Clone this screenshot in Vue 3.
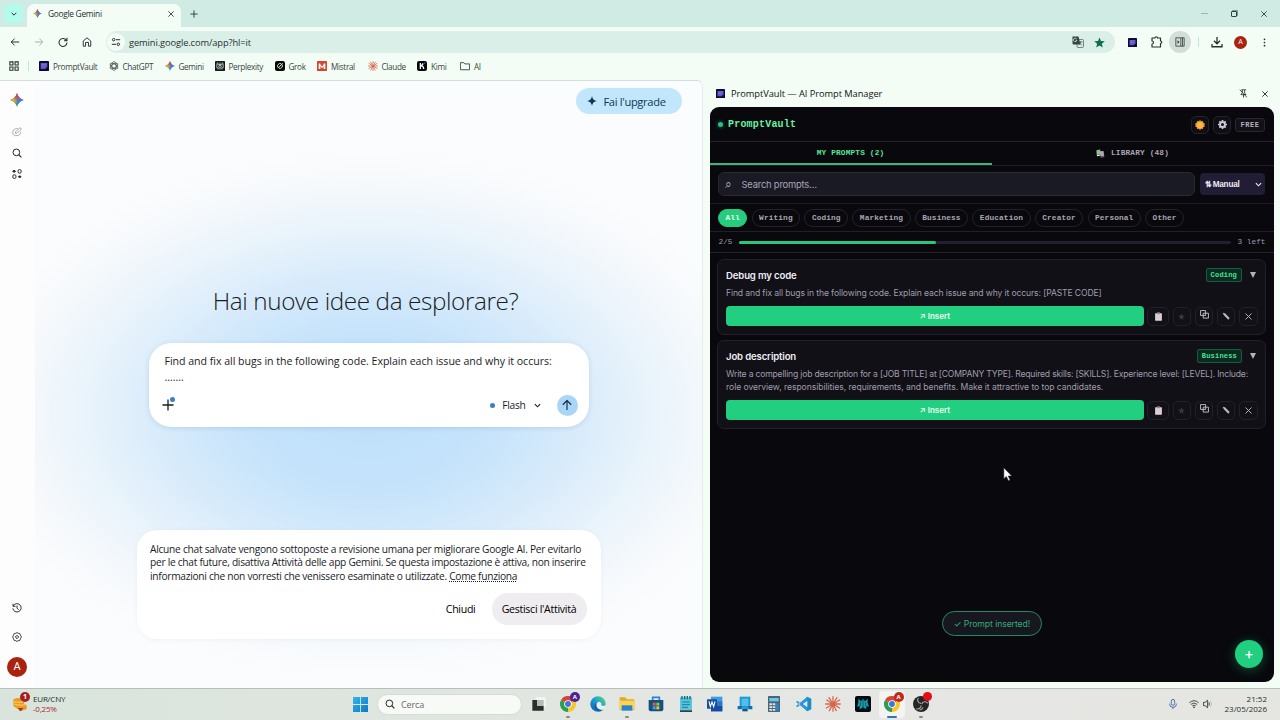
<template>
  <div class="desktop">
    <!-- icon sprite -->
    <svg class="sprite" width="0" height="0">
      <defs>
        <linearGradient id="gBase" x1="0" y1="1" x2="1" y2="0">
          <stop offset="0.2" stop-color="#2f9d63" /><stop offset="0.5" stop-color="#3f7fd8" /><stop offset="1" stop-color="#2f73e0" />
        </linearGradient>
        <radialGradient id="gRed" cx="0.5" cy="0" r="0.55"><stop offset="0.5" stop-color="#d8474d" /><stop offset="1" stop-color="#dc4a4f" stop-opacity="0" /></radialGradient>
        <radialGradient id="gYellow" cx="0" cy="0.5" r="0.58"><stop offset="0.5" stop-color="#e3ad33" /><stop offset="1" stop-color="#e9b63a" stop-opacity="0" /></radialGradient>
        <linearGradient id="gEdge" x1="0" y1="1" x2="1" y2="0"><stop offset="0" stop-color="#0c59a4" /><stop offset="0.5" stop-color="#199bd8" /><stop offset="1" stop-color="#5fdc72" /></linearGradient>
        <linearGradient id="gWin" x1="0" y1="0" x2="1" y2="1"><stop offset="0" stop-color="#36b5e6" /><stop offset="1" stop-color="#0b78cf" /></linearGradient>
      </defs>
      <symbol id="spark" viewBox="0 0 24 24">
        <path fill="url(#gBase)" d="M12 0C13.500 6 18 10.500 24 12C18 13.500 13.500 18 12 24C10.500 18 6 13.500 0 12C6 10.500 10.500 6 12 0Z" />
        <path fill="url(#gYellow)" d="M12 0C13.500 6 18 10.500 24 12C18 13.500 13.500 18 12 24C10.500 18 6 13.500 0 12C6 10.500 10.500 6 12 0Z" />
        <path fill="url(#gRed)" d="M12 0C13.500 6 18 10.500 24 12C18 13.500 13.500 18 12 24C10.500 18 6 13.500 0 12C6 10.500 10.500 6 12 0Z" />
      </symbol>
      <symbol id="sparkMono" viewBox="0 0 24 24"><path fill="currentColor" d="M12 0C13 7 17 11 24 12C17 13 13 17 12 24C11 17 7 13 0 12C7 11 11 7 12 0Z" /></symbol>
      <symbol id="vault" viewBox="0 0 24 24"><rect width="24" height="24" rx="1" fill="#0e0a35" /><path d="M4 5H20V14L15 19H4Z" fill="#6257c4" /><path d="M6 8H17M6 12H14" stroke="#8c84df" stroke-width="1.5" /></symbol>
      <symbol id="gpt" viewBox="0 0 24 24"><g fill="none" stroke="#4d5552" stroke-width="1.9"><ellipse cx="12" cy="12" rx="5" ry="10.5" /><ellipse cx="12" cy="12" rx="5" ry="10.5" transform="rotate(60 12 12)" /><ellipse cx="12" cy="12" rx="5" ry="10.5" transform="rotate(120 12 12)" /></g></symbol>
      <symbol id="perplexity" viewBox="0 0 24 24"><rect width="24" height="24" rx="2" fill="#151b1a" /><path d="M12 3V21M5 4L12 10L19 4V9M5 4V9M4 9H20V16H17M4 9V16H7M12 10L7 14V20L12 15L17 20V14Z" fill="none" stroke="#d9e0dd" stroke-width="1.5" /></symbol>
      <symbol id="grok" viewBox="0 0 24 24"><rect width="24" height="24" rx="5" fill="#050807" /><path d="M15 6.5A6.3 6.3 0 0 0 7 15.5M9.5 17.5A6.3 6.3 0 0 0 17 8.5M7.5 17L18.500 5.500" fill="none" stroke="#fff" stroke-width="2" /></symbol>
      <symbol id="mistral" viewBox="0 0 24 24"><rect width="24" height="24" rx="2" fill="#d4452f" /><path d="M4 19V6H8V9H10V12H14V9H16V6H20V19H16V13H14V16H10V13H8V19Z" fill="#fff" /></symbol>
      <symbol id="claude" viewBox="0 0 24 24"><path d="M12 12L12 1M12 12L18 2.500M12 12L22 6M12 12L23 12M12 12L22 18M12 12L17 22M12 12L12 23M12 12L6.500 22M12 12L2 18M12 12L1 12M12 12L2.500 6M12 12L6 2.500" stroke="#d4664b" stroke-width="1.900" stroke-linecap="round" /></symbol>
      <symbol id="kimi" viewBox="0 0 24 24"><rect width="24" height="24" rx="5" fill="#060908" /><path d="M8 5V19M15 6L9 13M10 11Q16 12 16 19" fill="none" stroke="#fff" stroke-width="3" /><circle cx="18.500" cy="5" r="1.700" fill="#378bf2" /></symbol>
      <symbol id="folder" viewBox="0 0 24 24"><path d="M1 4H9L11.500 7H23V21H1Z" fill="none" stroke="currentColor" stroke-width="2.200" stroke-linejoin="round" /></symbol>
      <symbol id="apps" viewBox="0 0 24 24"><path d="M2 2H9.500V9.500H2ZM14.500 2H22V9.500H14.500ZM2 14.500H9.500V22H2ZM14.500 14.500H22V22H14.500Z" fill="none" stroke="currentColor" stroke-width="2.600" /></symbol>
      <symbol id="back" viewBox="0 0 24 24"><path d="M22 12H3M11 4L3 12L11 20" fill="none" stroke="currentColor" stroke-width="2.400" /></symbol>
      <symbol id="forward" viewBox="0 0 24 24"><path d="M2 12H21M13 4L21 12L13 20" fill="none" stroke="currentColor" stroke-width="2.400" /></symbol>
      <symbol id="reload" viewBox="0 0 24 24"><path d="M20 8A9.500 9.500 0 1 0 21.500 13M21.500 2V9H14.500" fill="none" stroke="currentColor" stroke-width="2.500" /></symbol>
      <symbol id="home" viewBox="0 0 24 24"><path d="M3 22V9.500L12 2L21 9.500V22H15.500V13H8.500V22Z" fill="none" stroke="currentColor" stroke-width="2.300" /></symbol>
      <symbol id="tune" viewBox="0 0 24 24"><g fill="none" stroke="currentColor" stroke-width="2.400"><circle cx="6.500" cy="6.500" r="3" /><path d="M12 6.500H22M2 17.500H12" /><circle cx="17.500" cy="17.500" r="3" /></g></symbol>
      <symbol id="close" viewBox="0 0 24 24"><path d="M4 4L20 20M20 4L4 20" stroke="currentColor" stroke-width="2.500" /></symbol>
      <symbol id="plus" viewBox="0 0 24 24"><path d="M12 1V23M1 12H23" stroke="currentColor" stroke-width="2.600" /></symbol>
      <symbol id="down" viewBox="0 0 24 24"><path d="M5 8.500L12 15.500L19 8.500" fill="none" stroke="currentColor" stroke-width="3" /></symbol>
      <symbol id="translate" viewBox="0 0 24 24"><rect x="10" y="7" width="13" height="16" rx="2" fill="#dcece7" stroke="#56645f" stroke-width="1.500" /><path d="M1 1H13L17 17H3Q1 17 1 15Z" fill="#36443f" /><path d="M10 8.500H7.500M9.800 8.500A3.500 3.500 0 1 1 9 5.500" fill="none" stroke="#e6f4ef" stroke-width="1.500" /><path d="M14 12H21M17.500 10V12Q17 16 13.500 18M15.500 14L20 19" fill="none" stroke="#56645f" stroke-width="1.500" /></symbol>
      <symbol id="star" viewBox="0 0 24 24"><path d="M12 1L15.200 8.600L23.500 9.300L17.200 14.700L19.100 22.800L12 18.500L4.900 22.800L6.800 14.700L0.500 9.300L8.800 8.600Z" fill="currentColor" /></symbol>
      <symbol id="puzzle" viewBox="0 0 24 24"><path d="M2 4H8A2.500 2.500 0 0 1 13 4H19V10A2.500 2.500 0 0 1 19 15V22H2V16A3 3 0 0 0 2 10Z" fill="none" stroke="currentColor" stroke-width="2.300" stroke-linejoin="round" /></symbol>
      <symbol id="panel" viewBox="0 0 24 24"><path d="M2 2H22V22H2ZM14 2V22M18 2V22" fill="none" stroke="currentColor" stroke-width="1.800" /><path d="M6 8L11 12L6 16Z" fill="currentColor" /></symbol>
      <symbol id="download" viewBox="0 0 24 24"><path d="M12 2V15M6 9.500L12 15.500L18 9.500M2 16V21.500H22V16" fill="none" stroke="currentColor" stroke-width="2.600" /></symbol>
      <symbol id="dots" viewBox="0 0 24 24"><g fill="currentColor"><circle cx="12" cy="3.500" r="2.300" /><circle cx="12" cy="12" r="2.300" /><circle cx="12" cy="20.500" r="2.300" /></g></symbol>
      <symbol id="pinOff" viewBox="0 0 24 24"><path d="M6 2H19M9 3V10L5 15H19L15 11V3M12 15V23M2 2L21 22" fill="none" stroke="currentColor" stroke-width="2" /></symbol>
      <symbol id="compose" viewBox="0 0 24 24"><path d="M14 4C6 3 1 8 1.500 14C2 19 7 22 13 20.500C18 20 21 17 20.500 12M8 15Q8 11 11 9L19 2Q23 2 22 6L14 13Q11 16 8 15Z" fill="none" stroke="currentColor" stroke-width="2" /></symbol>
      <symbol id="search" viewBox="0 0 24 24"><circle cx="10.500" cy="10.500" r="8" fill="none" stroke="currentColor" stroke-width="2.300" /><path d="M16 16L22.500 22.500" stroke="currentColor" stroke-width="2.500" /></symbol>
      <symbol id="gems" viewBox="0 0 24 24"><g fill="none" stroke="currentColor" stroke-width="2.200"><path d="M5 3L8.500 5.500L5 8L1.500 5.500Z" fill="currentColor" /><rect x="14.500" y="1.500" width="7.500" height="8.500" rx="3" /><rect x="2" y="14" width="7.500" height="8.500" rx="3" /><ellipse cx="18.500" cy="18.500" rx="3" ry="1.800" fill="currentColor" /></g></symbol>
      <symbol id="history" viewBox="0 0 24 24"><path d="M3 7A10 10 0 1 1 2 13M2.500 2V8H8.500M12 6V12.500L16 16" fill="none" stroke="currentColor" stroke-width="2.200" /></symbol>
      <symbol id="gear" viewBox="0 0 24 24"><g fill="none" stroke="currentColor"><path d="M12 1.500L15 3L19 4L20.500 8L22.500 12L20.500 16L19 20L15 21L12 22.500L9 21L5 20L3.500 16L1.500 12L3.500 8L5 4L9 3Z" stroke-width="2" stroke-linejoin="round" /><path d="M12 8L16 12L12 16L8 12Z" stroke-width="2.300" /></g></symbol>
      <symbol id="arrowUp" viewBox="0 0 24 24"><path d="M12 22V3M3.500 11.500L12 3L20.500 11.500" fill="none" stroke="currentColor" stroke-width="2.200" /></symbol>
      <symbol id="sun" viewBox="0 0 24 24"><path d="M12 0L15 3L19 2.500L20 6.500L24 9L22.500 12L24 15L20 17.500L19 21.500L15 21L12 24L9 21L5 21.500L4 17.500L0 15L1.500 12L0 9L4 6.500L5 2.500L9 3Z" fill="#ec951f" /><circle cx="12" cy="12" r="7.500" fill="#f6b847" /></symbol>
      <symbol id="cog" viewBox="0 0 24 24"><circle cx="12" cy="12" r="6.500" fill="none" stroke="#ccc9da" stroke-width="5" /><path d="M12 0V6M12 18V24M0 12H6M18 12H24M3.500 3.500L7.700 7.700M16.300 16.300L20.500 20.500M20.500 3.500L16.300 7.700M7.700 16.300L3.500 20.500" stroke="#ccc9da" stroke-width="4.500" /></symbol>
      <symbol id="books" viewBox="0 0 24 24"><path d="M1 3L11 1L13 14L2 16Z" fill="#8fc28a" /><path d="M9 6L20 5L22 18L12 20Z" fill="#aca5b6" /><path d="M12 20L22 18V21L13 23Z" fill="#75628f" /><path d="M2 16L11 15V18L3 19Z" fill="#e7efdf" /></symbol>
      <symbol id="clip" viewBox="0 0 24 24"><rect x="3" y="3" width="18" height="20" rx="1" fill="#dfd1d5" /><rect x="8" y="1" width="8" height="5" fill="#93878f" /><path d="M7 11H17M7 15H17" stroke="#c9bcc2" /></symbol>
      <symbol id="copy" viewBox="0 0 24 24"><path d="M1.500 1.500H15V14.500H1.500ZM8.500 8.500H22.500V21.500H8.500Z" fill="none" stroke="currentColor" stroke-width="2.600" /></symbol>
      <symbol id="pencil" viewBox="0 0 24 24"><path d="M2 2L9 4L23 18L19 23L5 9Z" fill="currentColor" /></symbol>
      <symbol id="windows" viewBox="0 0 24 24"><path d="M0 0H11.300V11.300H0ZM12.700 0H24V11.300H12.700ZM0 12.700H11.300V24H0ZM12.700 12.700H24V24H12.700Z" fill="url(#gWin)" /></symbol>
      <symbol id="taskview" viewBox="0 0 24 24"><rect x="7" y="2" width="15" height="15" fill="#f3f5f3" /><path d="M2 6H11V15H19V22H2Z" fill="#2b2c2c" /><rect x="9" y="6" width="10" height="9" fill="#b6b9b7" /></symbol>
      <symbol id="chrome" viewBox="0 0 24 24"><path d="M12 12L1.600 6A12 12 0 0 1 22.400 6Z" fill="#df4035" /><path d="M12 12L22.400 6A12 12 0 0 1 12 24Z" fill="#f6c72d" /><path d="M12 12V24A12 12 0 0 1 1.600 6Z" fill="#2d9e50" /><circle cx="12" cy="12" r="5.700" fill="#fff" /><circle cx="12" cy="12" r="4.400" fill="#3c78dc" /></symbol>
      <symbol id="edge" viewBox="0 0 24 24"><circle cx="12" cy="12" r="11.500" fill="url(#gEdge)" /><path d="M10 12Q11 8 15 9Q18 10 17 14Q21 16 23.500 13V18L17 22Q7 21 10 12Z" fill="#e4f0ea" /><path d="M9 10Q4 16 9 21Q14 25 19 21Q8 21 9 10Z" fill="#155ca8" /></symbol>
      <symbol id="explorer" viewBox="0 0 24 24"><path d="M1 2H9L12 5H23V21H1Z" fill="#e7a922" /><path d="M1 7H23V20H1Z" fill="#fad557" /><path d="M4 14H20V22H4Z" fill="#2784c9" /></symbol>
      <symbol id="store" viewBox="0 0 24 24"><path d="M7 7V2H17V7" fill="none" stroke="#2388cc" stroke-width="2.500" /><path d="M1 6H23V20Q23 23 20 23H4Q1 23 1 20Z" fill="#174f81" /><path d="M7 10H11.500V14.500H7Z" fill="#e45b39" /><path d="M12.500 10H17V14.500H12.500Z" fill="#8bc34a" /><path d="M7 15.500H11.500V20H7Z" fill="#37a7e3" /><path d="M12.500 15.500H17V20H12.500Z" fill="#f3c13a" /></symbol>
      <symbol id="notepad" viewBox="0 0 24 24"><path d="M3 2H21V24H3Z" fill="#59c6dc" /><path d="M3 21.500H21V24H3Z" fill="#3a3c43" /><path d="M6 0V5M10 0V5M14 0V5M18 0V5" stroke="#176579" stroke-width="2" /><path d="M6 9H18M6 13H18M6 17H15" stroke="#167f99" stroke-width="1.500" /></symbol>
      <symbol id="word" viewBox="0 0 24 24"><path d="M6 1H23V23H6Z" fill="#3f9be2" /><path d="M6 8H23V15H6Z" fill="#2877cb" /><path d="M6 15H23V23H6Z" fill="#164b9e" /><rect y="5" width="15" height="14" rx="1" fill="#184d9e" /><path d="M3 8L5 16L7.500 9L10 16L12 8" fill="none" stroke="#fff" stroke-width="1.700" /></symbol>
      <symbol id="remote" viewBox="0 0 24 24"><path d="M4 1H20V19H4Z" fill="#2199d8" /><path d="M1 15H7V20H1ZM17 15H23V20H17Z" fill="#126ea8" /><path d="M7 4H17V15H7Z" fill="#4fc0ec" /><path d="M8 19H16V23H8Z" fill="#125782" /></symbol>
      <symbol id="calc" viewBox="0 0 24 24"><rect x="3" width="18" height="24" rx="1" fill="#4e6376" /><path d="M5 3H19V8H5Z" fill="#6bc7e8" /><path d="M5 11H9V14H5ZM10 11H14V14H10ZM5 15.500H9V18H5ZM10 15.500H14V18H10ZM5 19.500H9V22H5ZM10 19.500H14V22H10Z" fill="#dce5ea" /><path d="M15 11H19V22H15Z" fill="#2687c6" /></symbol>
      <symbol id="vscode" viewBox="0 0 24 24"><path d="M17 1L23 4V20L17 23L5 12Z" fill="#1e8ccd" /><path d="M17 7V17L10 12Z" fill="#e4e8e4" /><path d="M2 7L17 19V23L0 9ZM2 17L17 5V1L0 15Z" fill="#2c9fdd" /></symbol>
      <symbol id="pplx" viewBox="0 0 24 24"><rect width="24" height="24" rx="3" fill="#040c10" /><path d="M5 4L9 8L12 4L15 8L19 4V10L21 16L17 15V20L12 17L7 20V15L3 16L5 10Z" fill="#199cad" /><path d="M12 5V20M8 9V15M16 9V15" stroke="#083941" /></symbol>
      <symbol id="obs" viewBox="0 0 24 24"><circle cx="12" cy="12" r="12" fill="#252526" /><g fill="none" stroke="#a9abad" stroke-width="1.700"><path d="M12 11A5 5 0 0 1 8 3M13 12A5 5 0 0 1 22 11M12 14A5 5 0 0 1 5 19M15 17Q14 20 10 21" /></g></symbol>
      <symbol id="mic" viewBox="0 0 24 24"><rect x="8" y="1" width="8" height="14" rx="4" fill="none" stroke="currentColor" stroke-width="2" /><path d="M4 11V13A8 7 0 0 0 20 13V11M12 20V24" fill="none" stroke="currentColor" stroke-width="2" /></symbol>
      <symbol id="wifi" viewBox="0 0 24 24"><path d="M1 9Q12-1 23 9M4.500 13Q12 6 19.500 13M8 16.500Q12 13 16 16.500" fill="none" stroke="currentColor" stroke-width="2" /><circle cx="12" cy="20" r="2" fill="currentColor" /></symbol>
      <symbol id="sound" viewBox="0 0 24 24"><path d="M1 8H5L11 3V21L5 16H1ZM14 8Q17 12 14 16" fill="none" stroke="currentColor" stroke-width="2" /><path d="M18 5Q23 12 18 19" fill="none" stroke="#b9bcb8" stroke-width="2" /></symbol>
      <symbol id="coins" viewBox="0 0 24 24"><path d="M2 5Q10 1 18 5V12L22 14V20L12 23L8 19L2 15Z" fill="#e89b25" /><path d="M2 8Q9 11 17 8M3 12Q10 15 20 13" fill="none" stroke="#f8c659" stroke-width="2" /><path d="M9 18H17L13 23Z" fill="#a4322d" /></symbol>
    </svg>

    <!-- tab strip -->
    <div class="tab-strip">
      <div class="tab-search"><svg class="s8"><use href="#down" /></svg></div>
      <div class="tab">
        <svg class="s9"><use href="#spark" /></svg>
        <span class="tab-title">Google Gemini</span>
        <svg class="tab-close"><use href="#close" /></svg>
      </div>
      <svg class="new-tab"><use href="#plus" /></svg>
      <div class="win-controls">
        <i class="minimize"></i>
        <i class="restore"></i>
        <svg class="s8"><use href="#close" /></svg>
      </div>
    </div>

    <div class="toolbar">
      <svg class="nav-icon"><use href="#back" /></svg>
      <svg class="nav-icon muted"><use href="#forward" /></svg>
      <svg class="nav-icon"><use href="#reload" /></svg>
      <svg class="nav-icon"><use href="#home" /></svg>
      <div class="url-bar">
        <span class="site-info"><svg class="s10"><use href="#tune" /></svg></span>
        <span class="url">gemini.google.com/app?hl=it</span>
        <svg class="translate"><use href="#translate" /></svg>
        <svg class="bookmark-star"><use href="#star" /></svg>
      </div>
      <div class="extensions">
        <svg class="s9"><use href="#vault" /></svg>
        <svg class="puzzle"><use href="#puzzle" /></svg>
        <span class="panel-toggle"><svg class="s10"><use href="#panel" /></svg></span>
        <i class="divider"></i>
        <svg class="download"><use href="#download" /></svg>
        <span class="avatar small">A</span>
        <svg class="menu"><use href="#dots" /></svg>
      </div>
    </div>

    <div class="bookmarks">
      <svg class="s10"><use href="#apps" /></svg>
      <i class="divider"></i>
      <span v-for="b in bookmarks" :key="b.name" class="bookmark" :style="{ width: b.width + 'px' }">
        <svg class="bookmark-icon"><use :href="'#' + b.icon" /></svg>{{ b.name }}
      </span>
    </div>

    <div class="workspace">
      <!-- Gemini -->
      <div class="gemini">
        <nav class="rail">
          <svg class="rail-logo"><use href="#spark" /></svg>
          <svg class="rail-icon faded"><use href="#compose" /></svg>
          <svg class="rail-icon"><use href="#search" /></svg>
          <svg class="rail-icon"><use href="#gems" /></svg>
          <svg class="rail-icon bottom"><use href="#history" /></svg>
          <svg class="rail-icon"><use href="#gear" /></svg>
          <span class="avatar">A</span>
        </nav>
        <main class="chat">
          <button class="upgrade"><svg class="s10"><use href="#sparkMono" /></svg>Fai l'upgrade</button>
          <h1>Hai nuove idee da esplorare?</h1>
          <div class="composer">
            <p class="prompt-text">Find and fix all bugs in the following code. Explain each issue and why it occurs:</p>
            <p class="prompt-dots">.......</p>
            <div class="composer-bar">
              <span class="attach"><svg class="s12"><use href="#plus" /></svg><i></i></span>
              <span class="model-dot"></span>
              <span class="model">Flash</span>
              <svg class="s9 chevron"><use href="#down" /></svg>
              <button class="send"><svg class="s12"><use href="#arrowUp" /></svg></button>
            </div>
          </div>
          <div class="notice">
            <p class="n1">Alcune chat salvate vengono sottoposte a revisione umana per migliorare Google AI. Per evitarlo</p>
            <p>per le chat future, disattiva Attività delle app Gemini. Se questa impostazione è attiva, non inserire</p>
            <p>informazioni che non vorresti che venissero esaminate o utilizzate. <a>Come funziona</a></p>
            <div class="notice-actions">
              <button class="plain">Chiudi</button>
              <button class="filled">Gestisci l'Attività</button>
            </div>
          </div>
        </main>
      </div>

      <!-- PromptVault side panel -->
      <aside class="side">
        <div class="side-title">
          <svg class="s9"><use href="#vault" /></svg>
          <span>PromptVault — AI Prompt Manager</span>
          <svg class="s9 pin"><use href="#pinOff" /></svg>
          <svg class="side-close"><use href="#close" /></svg>
        </div>
        <div class="vault">
          <header class="vault-header">
            <i class="status"></i>
            <span class="brand">PromptVault</span>
            <button class="head-btn"><svg class="s10"><use href="#sun" /></svg></button>
            <button class="head-btn"><svg class="s9"><use href="#cog" /></svg></button>
            <span class="plan">FREE</span>
          </header>
          <div class="vault-tabs">
            <div class="vault-tab active">MY PROMPTS (2)</div>
            <div class="vault-tab"><svg class="s9"><use href="#books" /></svg>LIBRARY (48)</div>
          </div>
          <div class="search-row">
            <div class="search-box"><span class="lens">⌕</span>{{ placeholder }}</div>
            <div class="sort"><span class="sort-arrows">⇅</span>Manual<svg class="s9"><use href="#down" /></svg></div>
          </div>
          <div class="chips">
            <span v-for="c in categories" :key="c" class="chip" :class="{ active: c === activeCategory }">{{ c }}</span>
          </div>
          <div class="usage">
            <span>{{ used }}/{{ limit }}</span>
            <div class="usage-bar"><div class="usage-fill" :style="{ width: (used / limit) * 100 + '%' }"></div></div>
            <span>{{ limit - used }} left</span>
          </div>
          <div class="cards">
            <article v-for="p in prompts" :key="p.title" class="card">
              <div class="card-head">
                <h2>{{ p.title }}</h2>
                <span class="tag">{{ p.category }}</span>
                <span class="caret"></span>
              </div>
              <div class="card-text"><p v-for="(line, i) in p.lines" :key="i">{{ line }}</p></div>
              <div class="card-actions">
                <button class="insert">↗ Insert</button>
                <button v-for="a in actions" :key="a" class="action" :class="a"><svg class="s9"><use :href="'#' + a" /></svg></button>
              </div>
            </article>
          </div>
          <div class="toast">✓ Prompt inserted!</div>
          <button class="fab">+</button>
        </div>
      </aside>
    </div>

    <!-- taskbar -->
    <div class="taskbar">
      <div class="widget">
        <span class="coins"><svg class="s16"><use href="#coins" /></svg><b>1</b></span>
        <div class="rate"><span>EUR/CNY</span><span class="down">-0,25%</span></div>
      </div>
      <svg class="start"><use href="#windows" /></svg>
      <div class="task-search"><svg class="s10"><use href="#search" /></svg>Cerca</div>
      <div class="task-apps">
        <span v-for="(t, i) in taskApps" :key="i" class="task-app" :class="t.state">
          <svg class="s16"><use :href="'#' + t.icon" /></svg>
          <b v-if="t.badge" :class="t.badge">{{ t.letter }}</b>
        </span>
      </div>
      <div class="tray">
        <svg class="mic"><use href="#mic" /></svg>
        <svg class="s10"><use href="#wifi" /></svg>
        <svg class="s10"><use href="#sound" /></svg>
        <div class="clock"><span>21:52</span><span>23/05/2026</span></div>
      </div>
    </div>

    <svg class="cursor" viewBox="0 0 12 18"><path d="M1 1V14L4 11.500L6.500 16.500L8.500 15.500L6.300 10.800H10.500Z" fill="#fff" stroke="#222" stroke-width="0.700" /></svg>
  </div>
</template>

<script setup>
import { ref } from 'vue'

const bookmarks = [
  { name: 'PromptVault', icon: 'vault', width: 69.5 },
  { name: 'ChatGPT', icon: 'gpt', width: 56 },
  { name: 'Gemini', icon: 'spark', width: 50 },
  { name: 'Perplexity', icon: 'perplexity', width: 60 },
  { name: 'Grok', icon: 'grok', width: 42.5 },
  { name: 'Mistral', icon: 'mistral', width: 50.5 },
  { name: 'Claude', icon: 'claude', width: 49.5 },
  { name: 'Kimi', icon: 'kimi', width: 43 },
  { name: 'AI', icon: 'folder', width: 30 }
]

const placeholder = 'Search prompts…'
const categories = ['All', 'Writing', 'Coding', 'Marketing', 'Business', 'Education', 'Creator', 'Personal', 'Other']
const activeCategory = ref('All')
const used = ref(2)
const limit = 5
const actions = ['clip', 'star', 'copy', 'pencil', 'close']

const prompts = [
  {
    title: 'Debug my code',
    category: 'Coding',
    lines: ['Find and fix all bugs in the following code. Explain each issue and why it occurs: [PASTE CODE]']
  },
  {
    title: 'Job description',
    category: 'Business',
    lines: [
      'Write a compelling job description for a [JOB TITLE] at [COMPANY TYPE]. Required skills: [SKILLS]. Experience level: [LEVEL]. Include:',
      'role overview, responsibilities, requirements, and benefits. Make it attractive to top candidates.'
    ]
  }
]

const taskApps = [
  { icon: 'taskview' },
  { icon: 'chrome', state: 'open', badge: 'purple', letter: 'A' },
  { icon: 'edge' },
  { icon: 'explorer', state: 'open' },
  { icon: 'store' },
  { icon: 'notepad' },
  { icon: 'word' },
  { icon: 'remote' },
  { icon: 'calc' },
  { icon: 'vscode' },
  { icon: 'claude' },
  { icon: 'pplx' },
  { icon: 'chrome', state: 'focused', badge: 'red', letter: 'A' },
  { icon: 'obs', state: 'open', badge: 'rec', letter: '' }
]
</script>

<style>
body {
  margin: 0;
  overflow: hidden;
}
</style>

<style scoped>
* {
  box-sizing: border-box;
}

.desktop {
  position: relative;
  width: 1280px;
  height: 720px;
  display: flex;
  flex-direction: column;
  overflow: hidden;
  background: #f3fdf6;
  color: #27302d;
  font-family: "Open Sans", "Noto Sans", sans-serif;
  white-space: nowrap;
}

.sprite {
  position: absolute;
}

svg {
  flex: none;
  display: block;
}

p,
h1,
h2 {
  margin: 0;
}

button {
  border: none;
  padding: 0;
  font-family: inherit;
  flex: none;
}

.s8 { width: 8px; height: 8px; }
.s9 { width: 9px; height: 9px; }
.s10 { width: 10px; height: 10px; }
.s12 { width: 12px; height: 12px; }
.s16 { width: 16px; height: 16px; }

/* browser */
.tab-strip {
  height: 27px;
  flex: none;
  display: flex;
  align-items: center;
  padding-left: 4px;
  background: #d0ebe3;
}

.tab-search {
  width: 19px;
  height: 19px;
  border-radius: 6px;
  display: flex;
  align-items: center;
  justify-content: center;
  background: #b3fbeb;
}

.tab {
  align-self: flex-end;
  width: 154px;
  height: 23px;
  margin-left: 4px;
  padding: 0 6px;
  display: flex;
  align-items: center;
  border-radius: 7px 7px 0 0;
  background: #f3fdf6;
}

.tab-title {
  margin-left: 6px;
  flex: 1;
  font-size: 8.4px;
  letter-spacing: -0.3px;
  padding-bottom: 4px;
}

.tab > svg {
  margin-bottom: 4px;
}

.tab-close {
  width: 8px;
  height: 8px;
}

.new-tab {
  width: 8px;
  height: 8px;
  margin-left: 9px;
}

.win-controls {
  margin-left: auto;
  padding-right: 12px;
  display: flex;
  align-items: center;
  gap: 23px;
}

.minimize {
  width: 7px;
  height: 1px;
  background: #9cb5ad;
}

.restore {
  width: 6px;
  height: 6px;
  border: 1px solid #33403b;
  border-radius: 1px;
  box-shadow: 1px -1px 0 0 #7e908a;
}

.toolbar {
  height: 30px;
  flex: none;
  display: flex;
  align-items: center;
  padding-left: 10px;
}

.nav-icon {
  width: 10px;
  height: 10px;
  margin-right: 14px;
}

.nav-icon.muted {
  color: #a5b1ab;
}

.url-bar {
  width: 1009px;
  height: 22px;
  display: flex;
  align-items: center;
  border-radius: 11px;
  background: #dbefe9;
}

.site-info {
  width: 18px;
  height: 18px;
  margin-left: 1px;
  border-radius: 50%;
  display: flex;
  align-items: center;
  justify-content: center;
  background: #f3fdf6;
}

.url {
  flex: 1;
  margin-left: 4px;
  font-size: 9.3px;
  letter-spacing: -0.1px;
}

.translate {
  width: 12px;
  height: 12px;
  margin-right: 10px;
}

.bookmark-star {
  width: 11px;
  height: 11px;
  margin-right: 10px;
  color: #0e6e50;
}

.extensions {
  flex: 1;
  display: flex;
  align-items: center;
  padding-left: 13px;
}

.puzzle {
  width: 12px;
  height: 12px;
  margin: 0 6px 0 14px;
}

.panel-toggle {
  width: 22px;
  height: 22px;
  margin-right: 7px;
  border-radius: 50%;
  display: flex;
  align-items: center;
  justify-content: center;
  background: #d2ded8;
}

.download {
  width: 12px;
  height: 12px;
  margin: 0 11px 0 12px;
}

.menu {
  width: 9px;
  height: 9px;
  margin-left: 13px;
}

.divider {
  width: 1px;
  height: 10px;
  background: #b5ecd7;
}

.avatar {
  width: 20px;
  height: 20px;
  border-radius: 50%;
  background: #a9230f;
  color: #fff;
  font-size: 11px;
  line-height: 20px;
  text-align: center;
  font-family: Roboto, sans-serif;
}

.avatar.small {
  width: 13px;
  height: 13px;
  font-size: 7px;
  line-height: 13px;
}

.bookmarks {
  height: 23px;
  flex: none;
  display: flex;
  align-items: center;
  padding: 0 0 5px 9px;
}

.bookmarks .divider {
  margin: 0 10px 0 9px;
}

.bookmark {
  display: flex;
  align-items: center;
  gap: 4px;
  font-size: 8.2px;
  letter-spacing: -0.34px;
  color: #3b4642;
}

.bookmark-icon {
  width: 10px;
  height: 10px;
}

.workspace {
  height: 608px;
  flex: none;
  display: flex;
}

/* gemini */
.gemini {
  width: 703px;
  display: flex;
  border-top: 1px solid #d3dfda;
  border-right: 1px solid #e6eeea;
  border-radius: 0 6px 0 0;
  background: #fdfdfe;
  overflow: hidden;
  color: #1a1c1f;
}

.rail {
  width: 34px;
  margin-right: 1px;
  display: flex;
  flex-direction: column;
  align-items: center;
  padding: 12px 0 11px;
}

.rail-logo {
  width: 14px;
  height: 14px;
  margin-bottom: 20px;
}

.rail-icon {
  width: 10px;
  height: 10px;
  margin-bottom: 11px;
}

.rail-icon.faded {
  color: #9b9d9f;
}

.rail-icon.bottom {
  margin-top: auto;
  margin-bottom: 19px;
}

.rail-icon.bottom + .rail-icon {
  margin-bottom: 15px;
}

.chat {
  flex: 1;
  display: flex;
  flex-direction: column;
  align-items: center;
  background: radial-gradient(ellipse 400px 262px at 50% 332px, #bfdffa 0%, #c5e3fb 30%, #d8ebfb 52%, #eaf4fb 72%, #f6f9fc 88%, #fbfcfd 100%);
  font-family: "Open Sans", sans-serif;
}

.upgrade {
  align-self: flex-end;
  width: 106px;
  height: 26px;
  margin: 7px 20.5px 0 0;
  padding-right: 4px;
  display: flex;
  align-items: center;
  justify-content: center;
  gap: 6px;
  border-radius: 13px;
  background: #c2e7fc;
  color: #0b3954;
  font-size: 11.1px;
  letter-spacing: -0.3px;
}

h1 {
  margin-top: 169px;
  font-size: 24.3px;
  line-height: 36px;
  font-weight: 300;
  letter-spacing: -0.4px;
  margin-left: -6px;
}

.composer {
  width: 440px;
  height: 84px;
  margin-top: 24px;
  padding: 10px 11px 0 16px;
  border-radius: 22px;
  background: #fff;
  box-shadow: 0 1px 5px rgba(80, 130, 175, 0.22);
  font-size: 10.6px;
}

.prompt-text,
.prompt-dots {
  line-height: 16px;
  letter-spacing: -0.03px;
}

.composer-bar {
  display: flex;
  align-items: center;
  height: 24px;
  margin-top: 8px;
  margin-left: -3px;
}

.attach {
  position: relative;
  margin-right: auto;
}

.attach i {
  position: absolute;
  top: -2px;
  right: -1px;
  width: 5px;
  height: 5px;
  border-radius: 50%;
  background: #397fc9;
}

.model-dot {
  width: 5px;
  height: 5px;
  border-radius: 50%;
  margin-right: 7px;
  background: #397fc9;
}

.model {
  font-size: 10.2px;
  letter-spacing: -0.25px;
}

.chevron {
  margin: 0 15px 0 7px;
}

.send {
  width: 21px;
  height: 21px;
  border-radius: 50%;
  display: flex;
  align-items: center;
  justify-content: center;
  background: #a9d6f6;
  color: #10253a;
}

.notice {
  width: 464px;
  height: 109px;
  margin-top: 102.5px;
  padding: 13.5px 14px 0 13.5px;
  border-radius: 20px;
  background: #fff;
  box-shadow: 0 1px 5px rgba(100, 140, 170, 0.08);
  font-size: 10.2px;
  line-height: 13.4px;
  letter-spacing: -0.28px;
}

.n1 {
  letter-spacing: -0.26px;
}

.notice a {
  text-decoration: underline dotted;
}

.notice-actions {
  display: flex;
  justify-content: flex-end;
  align-items: center;
  gap: 16px;
  margin-top: 10px;
}

.notice-actions button {
  background: none;
  font-size: 10.6px;
  letter-spacing: -0.3px;
}

.notice-actions .filled {
  width: 95px;
  height: 32px;
  border-radius: 16px;
  background: #efedef;
}

/* side panel */
.side {
  width: 577px;
  padding: 0 6px 6px 6.5px;
}

.side-title {
  height: 27px;
  display: flex;
  align-items: center;
  padding: 0 5px 0 6.5px;
  color: #101513;
  font-size: 9.3px;
}

.side-title span {
  flex: 1;
  margin-left: 6px;
  letter-spacing: -0.06px;
}

.pin {
  margin-right: 13px;
}

.side-close {
  width: 8px;
  height: 8px;
}

.vault {
  position: relative;
  height: 575px;
  padding: 0 0.5px 0 0;
  border-radius: 9px;
  background: #08080d;
  color: #9d9aab;
  font-family: Inter, "DejaVu Sans", sans-serif;
  overflow: hidden;
}

.vault-header {
  height: 35px;
  display: flex;
  align-items: center;
  padding: 1px 8.5px 0;
  border-bottom: 1px solid #22222a;
}

.status {
  width: 5px;
  height: 5px;
  border-radius: 50%;
  background: #2fbd80;
  box-shadow: 0 0 4px #1c8c5b;
}

.brand {
  flex: 1;
  margin-left: 5px;
  color: #67f3a3;
  font: bold 10px "Liberation Mono", monospace;
  letter-spacing: 0.2px;
}

.head-btn {
  width: 18px;
  height: 18px;
  margin-right: 4px;
  display: flex;
  align-items: center;
  justify-content: center;
  border: 1px solid #24232c;
  border-radius: 5px;
  background: #0e0e14;
}

.plan {
  width: 30px;
  height: 14px;
  border: 1px solid #292731;
  border-radius: 3px;
  background: #111117;
  color: #b5b0c0;
  font: bold 7px/12px "Liberation Mono", monospace;
  letter-spacing: 0.6px;
  text-align: center;
}

.vault-tabs {
  height: 24px;
  display: flex;
  border-bottom: 1px solid #1e1e26;
  font: bold 7.8px "Liberation Mono", monospace;
  letter-spacing: 0.15px;
}

.vault-tab {
  flex: 1;
  display: flex;
  align-items: center;
  justify-content: center;
  gap: 6px;
  padding-bottom: 1px;
  color: #a8a4b1;
}

.vault-tab.active {
  padding-bottom: 0;
  color: #58e697;
  border-bottom: 2px solid #45b27c;
}

.search-row {
  height: 38px;
  display: flex;
  align-items: center;
  gap: 5px;
  padding: 0 8.5px 1px;
  border-bottom: 1px solid #1d1d25;
}

.search-box {
  flex: 1;
  height: 24px;
  display: flex;
  align-items: center;
  padding-left: 6px;
  border: 1px solid #292833;
  border-radius: 6px;
  background: #1a1a24;
  color: #aaa5b9;
  font-size: 9.4px;
  letter-spacing: -0.2px;
}

.lens {
  width: 16.5px;
  font: 12px "DejaVu Sans", sans-serif;
}

.sort {
  width: 65px;
  height: 22px;
  display: flex;
  align-items: center;
  padding: 0 2px 0 5px;
  border-radius: 4px;
  background: #201d34;
  color: #eeebf6;
  font: bold 8.2px "Liberation Sans", sans-serif;
  letter-spacing: -0.25px;
}

.sort-arrows {
  margin-right: 1px;
}

.sort svg {
  margin-left: auto;
}

.chips {
  height: 28px;
  display: flex;
  align-items: center;
  gap: 4.2px;
  padding-left: 8.5px;
  border-bottom: 1px solid #202028;
}

.chip {
  height: 18px;
  padding: 0 6.5px;
  border: 1px solid #23222b;
  border-radius: 9px;
  color: #aaa6b3;
  font: bold 7.8px/16px "Liberation Mono", monospace;
  letter-spacing: 0.12px;
}

.chip.active {
  border-color: #25cc7e;
  background: #25cc7e;
  color: #e5fff2;
}

.usage {
  height: 21px;
  display: flex;
  align-items: center;
  gap: 6px;
  padding: 0 8px 0 9px;
  border-bottom: 1px solid #24232b;
  font: 7.8px "Liberation Mono", monospace;
}

.usage-bar {
  flex: 1;
  height: 3px;
  border-radius: 2px;
  background: #22202e;
}

.usage-fill {
  height: 3px;
  border-radius: 2px;
  background: #2bc67d;
}

.cards {
  padding: 6px 7.5px 0 7.5px;
  display: flex;
  flex-direction: column;
  gap: 5px;
}

.card {
  padding: 8px 7.5px 8px 8px;
  border: 1px solid #21212a;
  border-radius: 7px;
  background: #101016;
}

.card-head {
  display: flex;
  align-items: center;
  height: 14px;
  padding-right: 1.5px;
}

h2 {
  flex: 1;
  color: #f0edf6;
  font-size: 9.6px;
  font-weight: 600;
  letter-spacing: -0.15px;
}

.tag {
  height: 14px;
  padding: 0 4px;
  border: 1px solid #195b3d;
  border-radius: 2px;
  background: #0b2b20;
  color: #4ce196;
  font: bold 7px/12px "Liberation Mono", monospace;
  letter-spacing: 0.2px;
}

.caret {
  margin: 0 0 0 8px;
  border: 3.5px solid transparent;
  border-top: 6px solid #b5b1bd;
  border-bottom: 0;
}

.card-text {
  margin: 5px 0 6px;
  font-size: 8.6px;
  line-height: 13px;
  color: #a09cac;
}

.card-text p {
  letter-spacing: -0.06px;
}

.card-text p:only-child {
  letter-spacing: -0.125px;
}

.card-text p:first-child:not(:last-child) {
  letter-spacing: -0.19px;
}

.card-actions {
  display: flex;
  align-items: center;
  gap: 3.6px;
}

.insert {
  flex: 1;
  height: 20px;
  border-radius: 4px;
  background: #22cf80;
  color: #ecfff5;
  font-size: 8px;
  font-weight: 600;
}

.action {
  width: 18.5px;
  height: 19px;
  display: flex;
  align-items: center;
  justify-content: center;
  border: 1px solid #22212a;
  border-radius: 5px;
  background: #111117;
  color: #bdb8c6;
}

.action.clip {
  width: 22px;
}

.action.star {
  color: #383641;
}

.action.star svg {
  width: 7px;
  height: 7px;
}

.action.copy svg {
  margin-bottom: 4px;
}

.action.pencil svg {
  width: 8px;
  height: 8px;
}

.toast {
  position: absolute;
  left: 232.5px;
  top: 504px;
  width: 100px;
  height: 25px;
  border: 1px solid #278963;
  border-radius: 13px;
  background: #16171f;
  color: #37a779;
  font-size: 8.7px;
  line-height: 24px;
  letter-spacing: -0.1px;
  text-align: center;
}

.fab {
  position: absolute;
  right: 11px;
  bottom: 14px;
  width: 28px;
  height: 28px;
  border-radius: 50%;
  background: #20cf80;
  box-shadow: 0 2px 12px rgba(32, 207, 128, 0.35);
  color: #fff;
  font-size: 15px;
  line-height: 28px;
}

/* taskbar */
.taskbar {
  flex: 1;
  display: flex;
  align-items: center;
  padding-bottom: 1px;
  border-top: 1px solid #b7bfba;
  background: linear-gradient(90deg, #d9e5dc 0%, #dfe5df 30%, #e6e7e4 65%, #e5e6e2 100%);
}

.widget {
  width: 353px;
  display: flex;
  align-items: center;
  padding-left: 12px;
  gap: 5px;
}

.coins {
  position: relative;
}

.coins b {
  position: absolute;
  top: -4px;
  right: -2px;
  width: 10px;
  height: 10px;
  border-radius: 50%;
  background: #a51f21;
  color: #fff;
  font-size: 7px;
  line-height: 10px;
  text-align: center;
}

.rate {
  display: flex;
  flex-direction: column;
  font-size: 8px;
  line-height: 10.5px;
  letter-spacing: -0.2px;
}

.rate .down {
  color: #b02733;
}

.start {
  width: 15px;
  height: 15px;
}

.task-search {
  width: 145px;
  height: 21px;
  margin-left: 9px;
  padding-left: 7px;
  display: flex;
  align-items: center;
  gap: 6px;
  border: 1px solid #d5dcd6;
  border-radius: 11px;
  background: #f7faf6;
  color: #686d6a;
  font-size: 9px;
  letter-spacing: -0.1px;
}

.task-search svg {
  color: #1d211f;
}

.task-apps {
  display: flex;
  margin-left: 2px;
}

.task-app {
  position: relative;
  width: 29.45px;
  height: 27px;
  display: flex;
  align-items: center;
  justify-content: center;
}

.task-app.open::after,
.task-app.focused::after {
  content: "";
  position: absolute;
  bottom: 0;
  width: 4px;
  height: 2px;
  border-radius: 1px;
  background: #868b88;
}

.task-app.focused {
  background: #f3f4f1;
  background-clip: content-box;
  padding: 0 2px;
  border-radius: 5px;
}

.task-app.focused::after {
  width: 10px;
  background: #2c75b8;
}

.task-app b {
  position: absolute;
  top: 1px;
  right: 3px;
  width: 10px;
  height: 10px;
  border-radius: 50%;
  color: #fff;
  font-size: 6px;
  line-height: 10px;
  text-align: center;
}

.task-app .purple { background: #4c2193; }
.task-app .red { background: #b92c1c; }
.task-app .rec { right: 4px; width: 9px; height: 9px; background: #e30e13; }

.tray {
  margin-left: auto;
  display: flex;
  align-items: center;
  gap: 4px;
  padding-right: 13px;
}

.mic {
  width: 10px;
  height: 10px;
  margin-right: 7px;
  color: #345ca3;
}

.clock {
  width: 50px;
  display: flex;
  flex-direction: column;
  align-items: flex-end;
  font-size: 8px;
  line-height: 10.5px;
}

.cursor {
  position: absolute;
  left: 1003px;
  top: 467px;
  width: 10px;
  height: 15px;
}
</style>
